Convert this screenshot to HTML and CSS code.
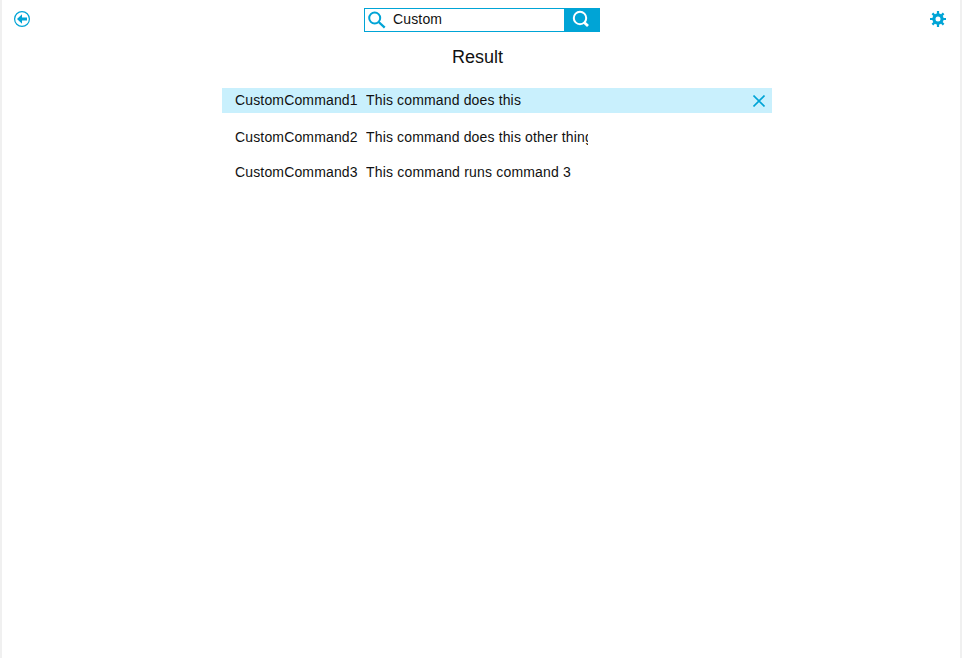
FILE: index.html
```html
<!DOCTYPE html>
<html lang="en">
<head>
<meta charset="utf-8">
<title>Result</title>
<link rel="stylesheet" href="styles.css">
</head>
<body>
<div class="app">
  <header class="topbar">
    <svg class="back" viewBox="0 0 18 18" width="18" height="18"><circle cx="9" cy="9" r="7.4" fill="none" stroke="#00a4d6" stroke-width="1.2"/><path d="M4 9l5-4.800v3.200H14v3.200H9v3.200z" fill="#00a4d6"/></svg>
    <div class="search">
      <svg class="lens" viewBox="0 0 18 18" width="18" height="18"><circle cx="6.700" cy="7" r="5.500" fill="none" stroke="#00a4d6" stroke-width="2"/><path d="M10.700 11l6 5.600" stroke="#00a4d6" stroke-width="2.300"/></svg>
      <span class="query">Custom</span>
      <span class="go"><svg viewBox="0 0 18 18" width="18" height="18"><circle cx="8" cy="8" r="6.200" fill="none" stroke="#fff" stroke-width="2"/><path d="M12 12.200l4 3.800" stroke="#fff" stroke-width="2.800"/></svg></span>
    </div>
    <svg class="gear" viewBox="0 0 18 18" width="18" height="18"><circle cx="9" cy="9" r="4.100" fill="none" stroke="#00a4d6" stroke-width="3.200"/><path d="M9 1v3.500M9 13.500v3.500M1 9h3.500M13.500 9h3.500M3.400 3.400l2 2M12.600 12.600l2 2M3.400 14.600l2-2M12.600 5.400l2-2" stroke="#00a4d6" stroke-width="2.200"/></svg>
  </header>
  <h1 class="title">Result</h1>
  <ul class="list">
    <li class="row selected"><span class="name">CustomCommand1</span><span class="desc">This command does this</span><svg class="close" viewBox="0 0 12 12" width="12" height="12"><path d="M.5.500l11 11M11.500.500l-11 11" stroke="#00a4d6" stroke-width="1.600"/></svg></li>
    <li class="row"><span class="name">CustomCommand2</span><span class="desc">This command does this other thing</span></li>
    <li class="row"><span class="name">CustomCommand3</span><span class="desc wide">This command runs command 3</span></li>
  </ul>
</div>
</body>
</html>
```
FILE: styles.css
```css
* { box-sizing: border-box; }
body { margin: 0; background: #fff; color: #111; font: 14px/16px "Liberation Sans", Arial, sans-serif; }
.app { height: 658px; border-left: 2px solid #f0f0f0; border-right: 2px solid #f0f0f0; overflow: hidden; }
.topbar { display: flex; height: 32px; padding: 8px 13px 0 11px; }
.back, .gear { margin-top: 2px; flex: none; }
.search { display: flex; width: 236px; height: 24px; margin-left: 333px; border: 1px solid #00a4d6; }
.lens { margin: 2px 0 0 3px; flex: none; }
.query { margin: 2px 0 0 7px; flex: 1; letter-spacing: .15px; }
.go { width: 35px; background: #00a4d6; padding: 1px 0 0 8px; }
.go svg { display: block; }
.gear { margin-left: auto; }
.title { margin: 14px 0 0 450px; font-size: 18px; line-height: 22px; font-weight: 400; }
.list { list-style: none; width: 550px; margin: 20px 0 0 220px; padding: 0; }
.row { display: flex; height: 25px; padding: 4px 7px 0 13px; margin-bottom: 10px; letter-spacing: .15px; }
.selected { background: #c9f0fd; margin-bottom: 12px; }
.name { width: 131px; }
.desc { width: 222px; height: 18px; overflow: hidden; white-space: nowrap; }
.wide { letter-spacing: .19px; }
.close { margin: 3px 0 0 auto; }
```
